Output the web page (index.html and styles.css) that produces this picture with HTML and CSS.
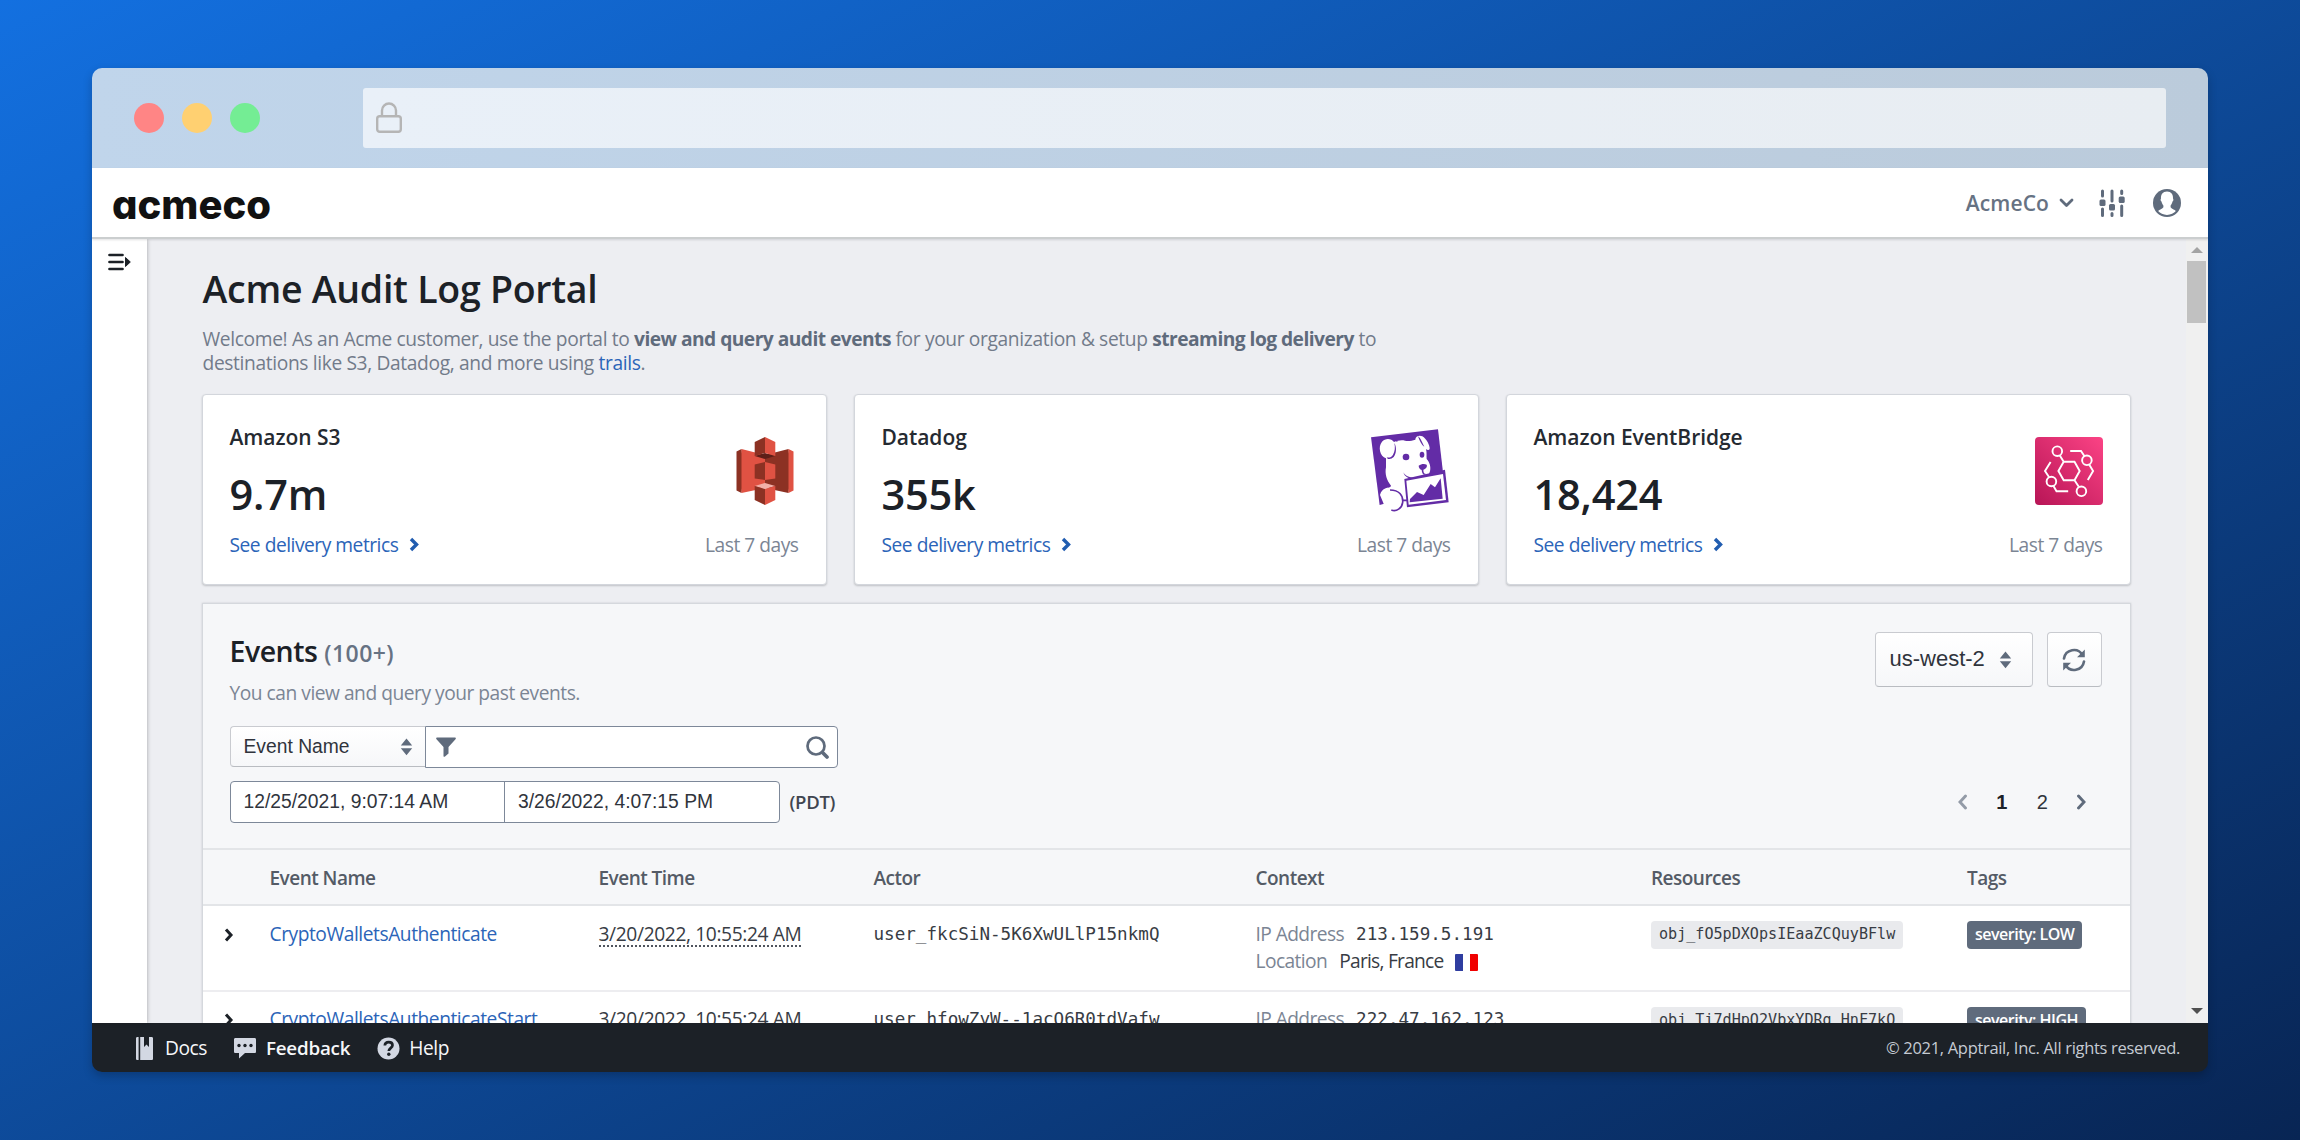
FILE: index.html
```html
<!DOCTYPE html>
<html lang="en">
<head>
<meta charset="utf-8">
<title>Acme Audit Log Portal</title>
<link rel="stylesheet" href="styles.css">
</head>
<body>
<div class="window">
  <div class="titlebar">
    <div class="lights"><i class="light red"></i><i class="light yellow"></i><i class="light green"></i></div>
    <div class="urlbar">
      <svg width="28" height="32" viewBox="0 0 28 32" fill="none" stroke="#b5b5b5" stroke-width="2.4"><rect x="2.2" y="14.2" width="23.6" height="15.6" rx="2.5"/><path d="M7 14V8.5a7 7 0 0 1 14 0V14"/></svg>
    </div>
  </div>

  <header class="appbar">
    <div class="logo">acmeco</div>
    <div class="account">
      <span class="org">AcmeCo</span>
      <svg class="caret" width="15" height="10" viewBox="0 0 15 10" fill="none" stroke="#5f6b7c" stroke-width="2.8" stroke-linecap="round" stroke-linejoin="round"><path d="M2 2l5.500 5.500L13 2"/></svg>
      <svg class="sliders" width="26" height="28" viewBox="0 0 26 28"><g stroke="#5f6b7c" stroke-width="3" stroke-linecap="round"><path d="M3.500 2v5M3.500 20v6.500M13 2v10M13 24.500v2M22.700 2v2.500M22.700 17v9.500"/></g><g fill="#5f6b7c"><rect x="0.500" y="10.500" width="6" height="6.500" rx="1.500"/><rect x="10" y="15" width="6" height="6.500" rx="1.500"/><rect x="19.700" y="7.500" width="6" height="6.500" rx="1.500"/></g></svg>
      <svg class="person" width="28" height="28" viewBox="0 0 28 28"><circle cx="14" cy="14" r="14" fill="#5f6b7c"/><path fill="#fff" d="M14 2.600c4.200 0 6.300 3 6 6.900.7.900.4 2.600-.5 3-.4 1.900-1.100 3-1.900 3.900v1.900c.8 1.700 4 2.100 5.300 3.700-2 2.300-5.200 3.900-8.900 3.900s-6.900-1.600-8.900-3.900c1.300-1.600 4.500-2 5.300-3.700v-1.900c-.8-.9-1.500-2-1.900-3.900-.9-.4-1.200-2.100-.5-3-.3-3.900 1.800-6.900 6-6.900z"/></svg>
    </div>
  </header>

  <div class="body">
    <nav class="rail">
      <svg width="23" height="18" viewBox="0 0 23 18"><path d="M1.500 2h13M1.500 9h13M1.500 16h13" stroke="#1c2127" stroke-width="2.700" stroke-linecap="round"/><path d="M17.500 4.500v9l4.800-4.500z" fill="#1c2127" stroke="#1c2127" stroke-linejoin="round"/></svg>
    </nav>

    <main class="content">
      <h1>Acme Audit Log Portal</h1>
      <p class="intro">Welcome! As an Acme customer, use the portal to <b>view and query audit events</b> for your organization &amp; setup <b>streaming log delivery</b> to<br>destinations like S3, Datadog, and more using <a>trails</a>.</p>

      <section class="cards">
        <article class="card">
          <div class="card-head">
            <div><h2>Amazon S3</h2><div class="stat">9.7m</div></div>
            <svg width="68" height="68" viewBox="0 0 68 68"><path fill="#8c3123" d="M10.500 12L5.500 14.500v39l5 2.500L13 34z"/><path fill="#e05243" d="M10.500 12L34 18v33l-23.500 5z"/><path fill="#8c3123" d="M57.500 12L34 18v33l23.500 5L60 34z"/><path fill="#e05243" d="M57.500 12l5 2.500v39l-5 2.500z"/><path fill="#8c3123" d="M34 25l-10.300 2.500v14L34 43z"/><path fill="#e05243" d="M34 25l10.300 2.500v14L34 43z"/><path fill="#5e1f18" d="M44.300 19L34 22l-10.300-3L34 16z"/><path fill="#8c3123" d="M34 0L23.700 5v14L34 16z"/><path fill="#e05243" d="M34 0l10.300 5v14L34 16z"/><path fill="#f2b0a9" d="M44.300 49L34 46l-10.300 3L34 52z"/><path fill="#8c3123" d="M34 68l-10.300-5V49L34 52z"/><path fill="#e05243" d="M34 68l10.300-5V49L34 52z"/></svg>
          </div>
          <div class="card-foot"><a>See delivery metrics <svg width="10" height="15" viewBox="0 0 10 15"><path d="M2 2l5.500 5.500L2 13"/></svg></a><span>Last 7 days</span></div>
        </article>

        <article class="card">
          <div class="card-head">
            <div><h2>Datadog</h2><div class="stat">355k</div></div>
            <svg width="84" height="84" viewBox="15 18 252 252"><path fill="#632ca6" d="M27 43L228 19l20 172L53 246z"/><path fill="#fff" d="M72 106C54 100 47 72 60 56c10-11 28-10 36 1 10-4 22-7 33-4 12 2 20 0 31-3 0-10 12-15 21-10 12 7 23 27 22 38-2 4-8 3-11 0 3 12 1 22 2 30 9 9 15 28 8 42-4 11-14 15-22 17l-35 6-8 8 2 67-40 6H70l-16-38c3-10 8-17 17-20 6-3 15-2 16-8-13-15-19-36-15-55z"/><path fill="#632ca6" d="M97 60c7 12 7 31-2 42-5 5-12 7-18 5l-3-4c8 2 15-1 19-8 6-10 7-22 4-35zM168 40c8 5 13 20 19 31-7-3-14-17-19-31zM101 50l8 4-6 2z"/><ellipse cx="132" cy="102" rx="10" ry="10" fill="#632ca6"/><ellipse cx="180" cy="95" rx="7" ry="9" fill="#632ca6"/><path fill="#632ca6" d="M170 128c8-6 18-6 24-3 3 7-4 13-10 15 0 8 2 13 9 13-7 5-13 1-14-12-5-2-9-7-9-13zM124 148c7 14 29 20 49 13-10 12-44 9-49-13z"/><path fill="#632ca6" d="M127 168l122-28 11 98-125 15z"/><path fill="#fff" d="M133 173l110-20 9 78-112 14z"/><path fill="#632ca6" d="M143 238l1-10 21-21 20 9 21-33 13 10 17-27 6 61z"/><path fill="none" stroke="#632ca6" stroke-width="5" d="M84 201c27 0 40 16 38 37-2 18-19 29-34 23M120 232h15"/></svg>
          </div>
          <div class="card-foot"><a>See delivery metrics <svg width="10" height="15" viewBox="0 0 10 15"><path d="M2 2l5.500 5.500L2 13"/></svg></a><span>Last 7 days</span></div>
        </article>

        <article class="card">
          <div class="card-head">
            <div><h2>Amazon EventBridge</h2><div class="stat">18,424</div></div>
            <svg width="68" height="68" viewBox="0 0 68 68"><defs><linearGradient id="eb" x1="0" y1="1" x2="1" y2="0"><stop offset="0" stop-color="#b71556"/><stop offset="1" stop-color="#fb4385"/></linearGradient></defs><rect width="68" height="68" rx="4" fill="url(#eb)"/><g fill="none" stroke="#fff" stroke-width="1.900"><path d="M23.400 34l5.300-9.300h10.800l5.200 9.300-5.200 9.300H28.700zM24.800 18.500l3.900 6.200M39.500 43.300l4.300 6.500M35.200 14H46l3.500 5.200M54.300 27.700l3.800 6.300-5.300 9M15.600 25L10 34l4 6M18.500 49l3 5.200h11.700"/><circle cx="22.300" cy="14.200" r="4.800"/><circle cx="51.900" cy="23.300" r="4.800"/><circle cx="16.400" cy="44.500" r="4.800"/><circle cx="46.400" cy="54.300" r="4.800"/></g></svg>
          </div>
          <div class="card-foot"><a>See delivery metrics <svg width="10" height="15" viewBox="0 0 10 15"><path d="M2 2l5.500 5.500L2 13"/></svg></a><span>Last 7 days</span></div>
        </article>
      </section>

      <section class="panel">
        <div class="panel-head">
          <div class="panel-top">
            <div>
              <h2 class="panel-title">Events <span>(100+)</span></h2>
              <p class="panel-sub">You can view and query your past events.</p>
            </div>
            <div class="region">
              <div class="button region-select">us-west-2 <svg width="13" height="18" viewBox="0 0 12 18"><path d="M.3 7.500L6 .5l5.700 7zM.3 10.300h11.400L6 17.300z"/></svg></div>
              <div class="button refresh"><svg width="24" height="24" viewBox="0 0 24 24"><path d="M2 10.500A10 10 0 0 1 20.500 7M22 13.500A10 10 0 0 1 3.500 17" fill="none" stroke="#5f6b7c" stroke-width="2.600" stroke-linecap="round"/><path fill="#5f6b7c" d="M22.800 1.500v7.800H15zM1.200 22.500v-7.800H9z"/></svg></div>
            </div>
          </div>
          <div class="search">
            <div class="button field-select">Event Name <svg width="13" height="18" viewBox="0 0 12 18"><path d="M.3 7.500L6 .5l5.700 7zM.3 10.300h11.400L6 17.300z"/></svg></div>
            <div class="query">
              <svg width="20" height="20" viewBox="0 0 20 20"><path fill="#5f6b7c" d="M1 .5h18c1 0 1.100 1.100.5 1.800L12.500 10v6.500L9 19.600c-.8.500-1.500.1-1.500-.7V10L.5 2.300C-.1 1.600.1.500 1 .5z"/></svg>
              <svg width="23" height="23" viewBox="0 0 23 23" fill="none" stroke="#5f6b7c"><circle cx="10" cy="10" r="8.500" stroke-width="2.700"/><path d="M16.500 16.500l4.500 4.500" stroke-width="3.700" stroke-linecap="round"/></svg>
            </div>
          </div>
          <div class="range-row">
            <div class="range"><div>12/25/2021, 9:07:14 AM</div><div>3/26/2022, 4:07:15 PM</div></div>
            <span class="zone">(PDT)</span>
            <div class="pager">
              <svg class="off" width="11" height="16" viewBox="0 0 11 16"><path d="M8.500 2L3 8l5.500 6"/></svg>
              <b>1</b><span>2</span>
              <svg width="11" height="16" viewBox="0 0 11 16"><path d="M2.500 2L8 8l-5.500 6"/></svg>
            </div>
          </div>
        </div>

        <div class="row head"><span></span><span>Event Name</span><span>Event Time</span><span>Actor</span><span>Context</span><span>Resources</span><span>Tags</span></div>

        <div class="row">
          <span><svg width="11" height="16" viewBox="0 0 11 16"><path d="M3 2.500L8 8l-5 5.500"/></svg></span>
          <a class="name">CryptoWalletsAuthenticate</a>
          <span><span class="time">3/20/2022, 10:55:24 AM</span></span>
          <span class="mono">user_fkcSiN-5K6XwULlP15nkmQ</span>
          <div class="context">
            <div><em>IP Address</em><span class="mono">213.159.5.191</span></div>
            <div><em>Location</em><span class="place">Paris, France</span><i class="flag"></i></div>
          </div>
          <span><span class="chip">obj_fO5pDXOpsIEaaZCQuyBFlw</span></span>
          <span><span class="tag">severity: LOW</span></span>
        </div>

        <div class="row">
          <span><svg width="11" height="16" viewBox="0 0 11 16"><path d="M3 2.500L8 8l-5 5.500"/></svg></span>
          <a class="name">CryptoWalletsAuthenticateStart</a>
          <span><span class="time">3/20/2022, 10:55:24 AM</span></span>
          <span class="mono">user_hfowZyW--1acO6R0tdVafw</span>
          <div class="context">
            <div><em>IP Address</em><span class="mono">222.47.162.123</span></div>
          </div>
          <span><span class="chip">obj_Ti7dHpO2VbxYDRg_HnF7kQ</span></span>
          <span><span class="tag">severity: HIGH</span></span>
        </div>
      </section>
    </main>

    <div class="scrollbar">
      <svg width="12" height="6" viewBox="0 0 12 6"><path fill="#a3a3a3" d="M0 6l6-6 6 6z"/></svg>
      <div class="thumb"></div>
      <svg class="down" width="12" height="6" viewBox="0 0 12 6"><path fill="#505050" d="M0 0l6 6 6-6z"/></svg>
    </div>
  </div>

  <footer class="footer">
    <a class="docs"><svg width="17" height="23" viewBox="0 0 17 23" fill="#d3d8e3"><path d="M1.500 0H2.600v23H1.500C.5 23 0 22.500 0 21.500v-20C0 .5.500 0 1.500 0zM4.200 0H8v10l2.500-2.500L13 10V0h2.500c1 0 1.500.5 1.500 1.500v20c0 1-.5 1.500-1.500 1.500H4.200z"/></svg>Docs</a>
    <a class="feedback"><svg width="22" height="22" viewBox="0 0 22 22"><path fill="#d3d8e3" d="M1.500 1h19c1 0 1.500.6 1.500 1.500v12c0 1-.5 1.500-1.500 1.500H11l-6 5.500V16H1.500C.5 16 0 15.500 0 14.500v-12C0 1.600.5 1 1.500 1z"/><g fill="#1c2127"><circle cx="5" cy="8.500" r="1.700"/><circle cx="11" cy="8.500" r="1.700"/><circle cx="17" cy="8.500" r="1.700"/></g></svg>Feedback</a>
    <a class="help"><svg width="23" height="23" viewBox="0 0 23 23"><circle cx="11.500" cy="11.500" r="11" fill="#d3d8e3"/><path d="M7.800 8.500c.2-2.200 1.800-3.300 3.900-3.300 2.200 0 3.800 1.200 3.800 3.100 0 2.700-3.700 3-3.700 5.700" fill="none" stroke="#1c2127" stroke-width="2.700"/><circle cx="11.800" cy="17.300" r="1.700" fill="#1c2127"/></svg>Help</a>
    <span class="copyright">© 2021, Apptrail, Inc. All rights reserved.</span>
  </footer>
</div>
</body>
</html>
```
FILE: styles.css
```css
* { box-sizing: border-box; }

body {
  margin: 0;
  width: 2300px;
  height: 1140px;
  padding: 68px 92px;
  overflow: hidden;
  background: linear-gradient(to bottom right, #1370e0 0%, #082554 100%);
  font: 19.2px/24.4px "Open Sans", "Noto Sans", sans-serif;
  letter-spacing: -0.48px;
  color: #1c2127;
}

h1, h2, p { margin: 0; }
svg { display: block; flex: none; }
a { color: #2b64b8; }

.window {
  display: flex;
  flex-direction: column;
  height: 1004px;
  border-radius: 10px;
  overflow: hidden;
  box-shadow: 0 4px 10px rgba(0, 0, 0, .22);
}

/* Browser chrome */
.titlebar {
  display: flex;
  align-items: center;
  height: 100px;
  padding: 0 42px;
  background: linear-gradient(to right, #c0d5eb, #bbcbdb);
}
.lights { display: flex; gap: 18px; width: 229px; }
.light { width: 30px; height: 30px; border-radius: 50%; }
.red { background: #ff8585; }
.yellow { background: #ffd071; }
.green { background: #74ed94; }
.urlbar {
  flex: 1;
  display: flex;
  align-items: center;
  height: 60px;
  padding-left: 12px;
  border-radius: 3px;
  background: linear-gradient(to right, #e9f0f8, #e8edf2);
}

/* Application header */
.appbar {
  display: flex;
  align-items: center;
  justify-content: space-between;
  height: 71px;
  padding: 0 27px 0 20px;
  background: #fff;
  border-bottom: 2px solid #cbcecf;
  position: relative;
  z-index: 1;
  box-shadow: 0 1px 2px rgba(17, 20, 24, .12);
}
.logo {
  font: 800 40px/48px Inter, sans-serif;
  font-feature-settings: "cv11";
  letter-spacing: 0;
  padding-top: 5px;
  color: #111;
}
.account { display: flex; align-items: center; }
.org { padding-top: 1px; font-size: 21px; font-weight: 600; color: #667283; letter-spacing: .1px; }
.caret { margin-left: 10px; }
.sliders { margin-left: 25px; }
.person { margin-left: 28px; }

.body { display: flex; height: 784px; }
.rail { width: 55px; padding: 14px 16px; background: #fff; box-shadow: 0 0 4px rgba(17, 20, 24, .35); z-index: 0; }
.content { flex: 1; height: 784px; padding: 25px 55.5px 0 54.5px; background: #edeef2; overflow: hidden; }

h1 { font-size: 37.5px; line-height: 50px; font-weight: 600; letter-spacing: -.26px; padding-left: 1px; }
.intro { margin-top: 13px; padding-left: 1px; color: #727b8a; letter-spacing: -.36px; }
.intro b { letter-spacing: -.53px; color: #5f6b7c; }

/* Destination cards */
.cards { display: grid; grid-template-columns: repeat(3, 1fr); gap: 27px; margin-top: 18px; }
.card {
  height: 191.5px;
  padding: 28px 27px 0;
  background: #fff;
  border: 1px solid #d3d6dc;
  border-radius: 4px;
  box-shadow: 0 1px 2px rgba(17, 20, 24, .2);
}
.card-head { display: flex; justify-content: space-between; align-items: center; height: 96px; }
.card h2 { font-size: 21px; line-height: 28px; font-weight: 600; letter-spacing: -.05px; color: #252a31; }
.stat { margin-top: 18px; font-size: 41.5px; line-height: 50px; font-weight: 600; letter-spacing: -.2px; }
.card-foot { display: flex; justify-content: space-between; margin-top: 13px; line-height: 26px; color: #7b8594; }
.card-foot a { display: flex; align-items: center; gap: 11px; }
.card-foot path { fill: none; stroke: #215db0; stroke-width: 3.4; }

/* Events panel */
.panel { height: 500px; margin-top: 18px; border: 1px solid #d5d8dd; box-shadow: 0 0 2px rgba(17, 20, 24, .15); background: #fff; }
.panel-head { height: 244px; padding: 27px 28px 0 27px; background: #f6f7f9; }
.panel-top { display: flex; justify-content: space-between; align-items: flex-start; }
.panel-title { font-size: 28.5px; line-height: 40px; font-weight: 600; letter-spacing: -.5px; }
.panel-title span { font-size: 23px; letter-spacing: .45px; color: #667283; }
.panel-sub { margin-top: 7.1px; line-height: 26px; color: #7b8594; }

.button {
  display: flex;
  align-items: center;
  justify-content: space-between;
  border: 1px solid #c9cbd0;
  border-bottom-color: #b9bcc1;
  border-radius: 4px;
  background: linear-gradient(#fff, #f6f7f9);
  font-family: "Liberation Sans", Arial, sans-serif;
  color: #30343c;
}
.button path { fill: #5f6b7c; }
.region { display: flex; gap: 13.5px; margin-top: 1px; }
.region-select { width: 158.5px; height: 54.5px; padding: 0 20px 0 14px; font-size: 22px; letter-spacing: 0; }
.refresh { width: 55px; height: 54.5px; justify-content: center; }
.refresh path[stroke] { fill: none; }

.search { display: flex; margin-top: 20px; }
.field-select { width: 195px; height: 41px; padding: 0 12px 0 13px; font-size: 19.3px; letter-spacing: 0; border-right: 0; border-radius: 4px 0 0 4px; }
.query {
  display: flex;
  align-items: center;
  justify-content: space-between;
  width: 413.5px;
  height: 41.5px;
  padding: 0 8px 0 10px;
  background: #fff;
  border: 1.5px solid #7d8899;
  border-radius: 0 4px 4px 0;
}

.range-row { display: flex; align-items: center; height: 42px; margin-top: 13px; }
.range {
  display: flex;
  width: 550px;
  height: 42px;
  border: 1.5px solid #7d8899;
  border-radius: 4px;
  background: #fff;
  font: 19.3px/39px "Liberation Sans", Arial, sans-serif;
  letter-spacing: 0;
  color: #30343c;
}
.range div { flex: 1; padding-left: 13px; }
.range div + div { border-left: 1.5px solid #7d8899; }
.zone { margin-left: 10px; font-size: 18.5px; font-weight: 600; letter-spacing: -.3px; color: #404550; }
.pager { display: flex; align-items: center; margin: 0 15px 0 auto; font: 20px/24px "Liberation Sans", Arial, sans-serif; }
.pager path { fill: none; stroke: #5f6b7c; stroke-width: 2.9; stroke-linecap: round; }
.pager .off { opacity: .65; }
.pager b { margin-left: 28px; }
.pager span { margin: 0 28px 0 30px; color: #30343c; }

/* Events table */
.row {
  display: grid;
  grid-template-columns: 46.5px 329px 275px 382px 395.5px 316px 1fr;
  height: 85.5px;
  padding: 14.5px 0 0 20.5px;
  border-top: 2px solid #ededf0;
  line-height: 26px;
  color: #383c44;
  white-space: nowrap;
}
.row.head + .row { border-color: #e3e5e8; }
.row path { fill: none; stroke: #1c2127; stroke-width: 3; }
.row svg { margin-top: 6px; }
.head { height: 56px; border-color: #e3e5e8; background: #f6f7f9; font-size: 19px; font-weight: 600; letter-spacing: -.52px; color: #545b66; }
.name { letter-spacing: -.45px; }
.time { letter-spacing: -.37px; border-bottom: 2px dotted #50555e; display: inline-block; line-height: 22px; padding-top: 0; }
.mono { font: 17.6px/26px "DejaVu Sans Mono", monospace; letter-spacing: 0; }
.context > div { display: flex; height: 27.3px; align-items: flex-start; }
.context em { font-style: normal; color: #7b8594; letter-spacing: -.58px; margin-right: 12px; }
.place { letter-spacing: -.76px; }
.flag { width: 23px; height: 17px; margin: 5.5px 0 0 11px; border-radius: 1px; background: linear-gradient(to right, #2f3da0 33%, #fff 33% 67%, #f00000 67%); }
.chip, .tag { display: inline-block; height: 27.5px; line-height: 27.5px; padding: 0 8px; border-radius: 4px; margin-top: .5px; vertical-align: top; }
.chip { background: #e9eaed; font-family: "DejaVu Sans Mono", monospace; font-size: 15.1px; letter-spacing: 0; }
.tag { background: #5f6b7c; color: #fff; font-size: 16px; font-weight: 600; letter-spacing: -.5px; }

/* Page scrollbar */
.scrollbar { display: flex; flex-direction: column; align-items: center; width: 22px; padding: 8px 1px 9px 0; background: #f0f0f0; }
.thumb { width: 19px; height: 62px; margin-top: 8px; background: #c1c1c1; }
.down { margin-top: auto; }

.footer { display: flex; align-items: center; height: 49px; padding: 1px 28px 0 44px; background: #1c2127; }
.footer a { display: flex; align-items: center; color: #f6f7f9; }
.docs { gap: 12px; margin-right: 27px; }
.feedback { gap: 10px; margin-right: 27px; font-size: 18.8px; font-weight: 600; letter-spacing: -.2px; }
.help { gap: 9px; }
.copyright { margin-left: auto; font-size: 16.5px; letter-spacing: -.32px; color: #c5cbd3; }
```
